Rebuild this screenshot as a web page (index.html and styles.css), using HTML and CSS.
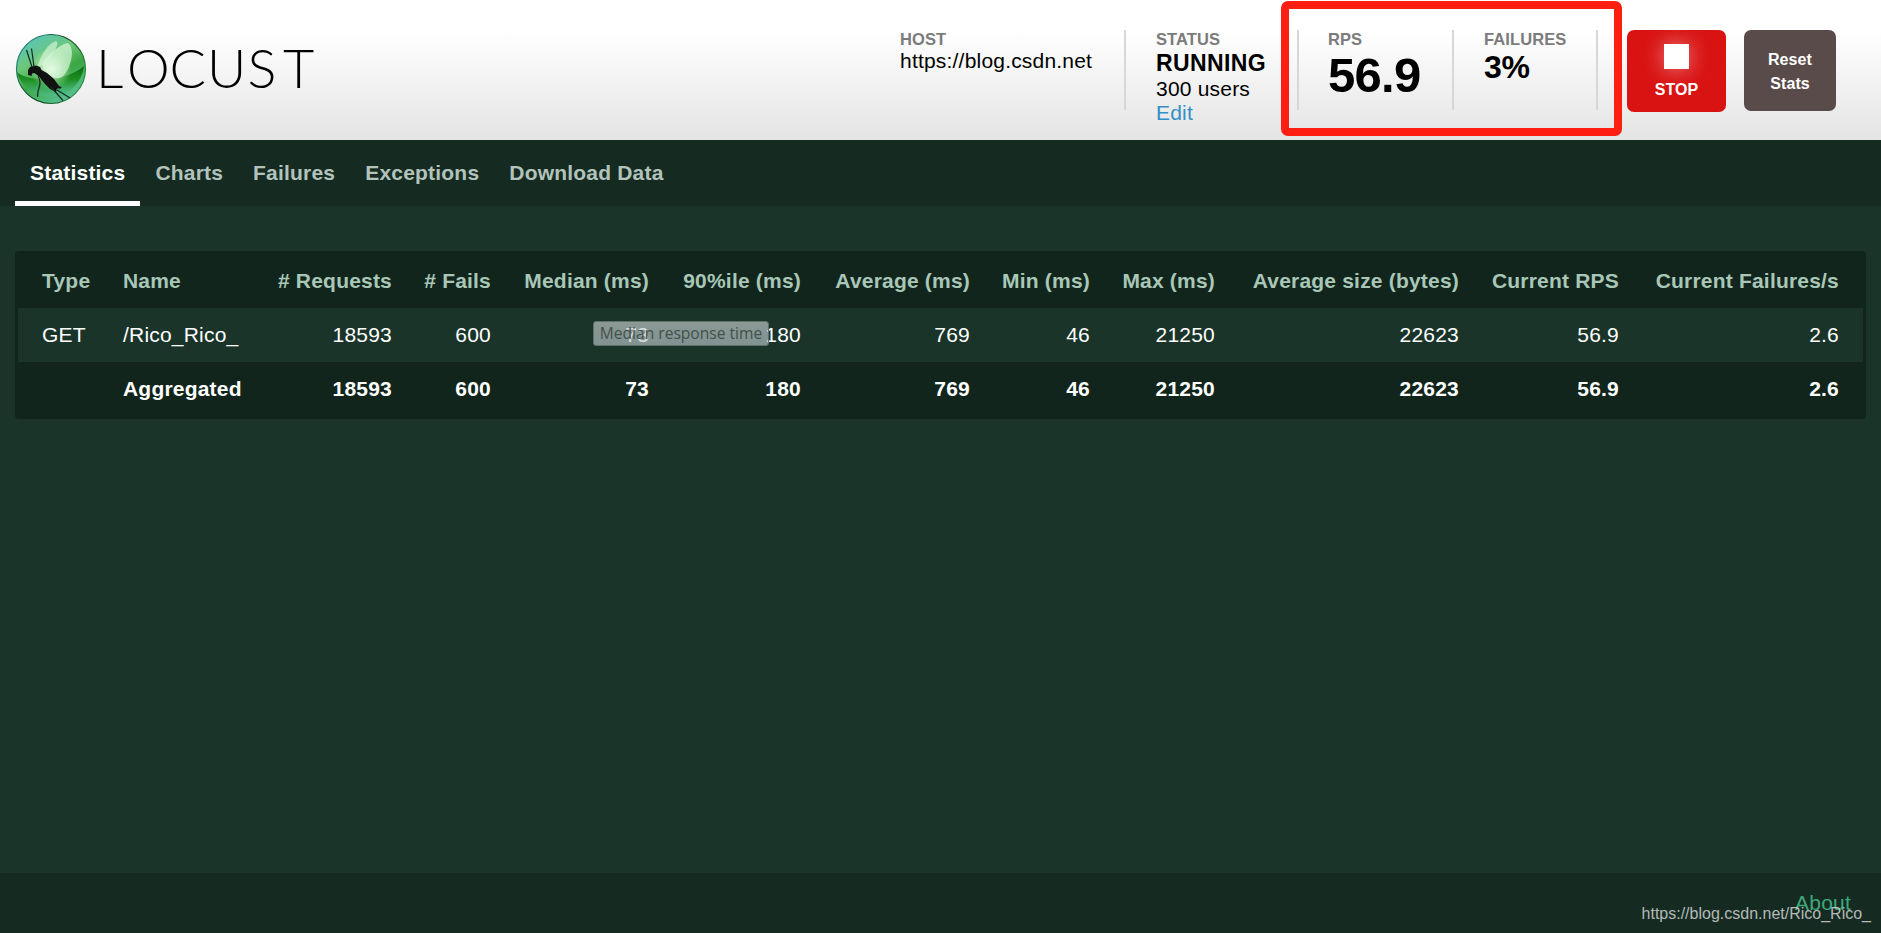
FILE: index.html
```html
<!DOCTYPE html>
<html lang="en">
<head>
    <meta charset="UTF-8">
    <title>Locust</title>
    <link rel="stylesheet" href="styles.css">
</head>
<body>
    <div class="top">
        <svg class="logo" width="306" height="80" viewBox="0 0 306 80">
            <defs>
                <linearGradient id="ball" x1="0.2" y1="0" x2="0.7" y2="1">
                    <stop offset="0" stop-color="#58c4be"/>
                    <stop offset="0.35" stop-color="#6cc878"/>
                    <stop offset="0.6" stop-color="#3da544"/>
                    <stop offset="1" stop-color="#58c49a"/>
                </linearGradient>
                <linearGradient id="shade" x1="0" y1="0" x2="0" y2="1">
                    <stop offset="0" stop-color="#0a6a0c"/>
                    <stop offset="0.45" stop-color="#178a1a" stop-opacity="0.85"/>
                    <stop offset="1" stop-color="#55c49a" stop-opacity="0.3"/>
                </linearGradient>
                <radialGradient id="glow">
                    <stop offset="0" stop-color="#fff"/>
                    <stop offset="0.4" stop-color="#e0f8dc" stop-opacity="0.7"/>
                    <stop offset="1" stop-color="#a0e0a0" stop-opacity="0"/>
                </radialGradient>
                <linearGradient id="rim" x1="0" y1="0" x2="1" y2="0.5">
                    <stop offset="0" stop-color="#2c9c9c"/>
                    <stop offset="0.6" stop-color="#0c3c18"/>
                    <stop offset="1" stop-color="#2a8a40"/>
                </linearGradient>
            </defs>
            <circle cx="36" cy="39" r="34.5" fill="url(#ball)"/>
            <path d="M1.6 42C16 53 50 52 69 36A34.5 34.5 0 0 1 1.6 42Z" fill="url(#shade)"/>
            <circle cx="36" cy="39" r="34.5" fill="none" stroke="url(#rim)" stroke-width="1.2"/>
            <circle cx="36" cy="39" r="21" fill="url(#glow)"/>
            <path d="M23 35C26 24 34 13 41 11Q45 13 38 23Q31 33 24 37Z" fill="#d8f6dc" fill-opacity="0.65"/>
            <path d="M27 34C34 25 44 14 53 13C60 18 57 36 49 45C43 52 34 46 29 40Z" fill="#d8f8da" fill-opacity="0.7"/>
            <path d="M13 40L15 37L21 35.5L25 37L26.500 40L32 43L39 49L44 56L46.500 57L46 58.500L42 58.500L41 62L35 59L29 53L24 46.500L19.500 43L17 43.500L16.500 46L13 45Z" fill="#111"/>
            <path d="M17 37L11.500 20M19 36.500L16.500 18.500M23 46Q26 51 24.500 56Q22.500 62 22.500 67M36 57L48 70.500M42 60L55 68" fill="none" stroke="#17242a" stroke-width="1.2"/>
            <text class="wordmark" y="58" x="81 112 154.5 192 232.5 268">LOCUST</text>
        </svg>
        <div class="boxes">
            <div class="box box-host">
                <div class="label">HOST</div>
                <div class="value">https://blog.csdn.net</div>
            </div>
            <div class="box box-status">
                <div class="label">STATUS</div>
                <div class="value running">RUNNING</div>
                <div class="value users">300 users</div>
                <a class="edit">Edit</a>
            </div>
            <div class="box box-rps">
                <div class="label">RPS</div>
                <div class="value rps">56.9</div>
            </div>
            <div class="box box-failures">
                <div class="label">FAILURES</div>
                <div class="value failures">3%</div>
            </div>
            <div class="button stop"><span class="stop-icon"></span>STOP</div>
            <div class="button reset">Reset<br>Stats</div>
        </div>
        <div class="highlight"></div>
    </div>

    <nav class="menu">
        <a class="tab active">Statistics</a>
        <a class="tab">Charts</a>
        <a class="tab">Failures</a>
        <a class="tab">Exceptions</a>
        <a class="tab">Download Data</a>
    </nav>

    <main class="main">
        <div class="stats-wrap">
            <table class="stats">
                <colgroup>
                    <col class="c-type"><col class="c-name"><col class="c-requests"><col class="c-fails">
                    <col class="c-median"><col class="c-ninety"><col class="c-average"><col class="c-min">
                    <col class="c-max"><col class="c-size"><col class="c-rps"><col class="c-failures">
                </colgroup>
                <thead>
                    <tr>
                        <th>Type</th>
                        <th>Name</th>
                        <th># Requests</th>
                        <th># Fails</th>
                        <th>Median (ms)</th>
                        <th>90%ile (ms)</th>
                        <th>Average (ms)</th>
                        <th>Min (ms)</th>
                        <th>Max (ms)</th>
                        <th>Average size (bytes)</th>
                        <th>Current RPS</th>
                        <th>Current Failures/s</th>
                    </tr>
                </thead>
                <tbody>
                    <tr>
                        <td>GET</td>
                        <td>/Rico_Rico_</td>
                        <td>18593</td>
                        <td>600</td>
                        <td class="median">73<span class="tooltip">Median response time</span></td>
                        <td>180</td>
                        <td>769</td>
                        <td>46</td>
                        <td>21250</td>
                        <td>22623</td>
                        <td>56.9</td>
                        <td>2.6</td>
                    </tr>
                    <tr class="total">
                        <td></td>
                        <td>Aggregated</td>
                        <td>18593</td>
                        <td>600</td>
                        <td>73</td>
                        <td>180</td>
                        <td>769</td>
                        <td>46</td>
                        <td>21250</td>
                        <td>22623</td>
                        <td>56.9</td>
                        <td>2.6</td>
                    </tr>
                </tbody>
            </table>
        </div>
    </main>

    <footer class="footer">
        <a class="about">About</a>
        <span class="watermark">https://blog.csdn.net/Rico_Rico_</span>
    </footer>
</body>
</html>
```
FILE: styles.css
```css
* {
    box-sizing: border-box;
}

body {
    margin: 0;
    height: 933px;
    display: flex;
    flex-direction: column;
    overflow: hidden;
    background: #1a342a;
    color: #fff;
    font-family: "Liberation Sans", Arial, sans-serif;
    font-size: 21px;
    letter-spacing: 0.2px;
}

.top {
    position: relative;
    height: 140px;
    flex: none;
    display: flex;
    justify-content: space-between;
    padding: 30px 45px 0 15px;
    background: linear-gradient(#fff 0, #fff 30px, #e4e4e4 140px);
    color: #000;
}

.wordmark {
    font-family: Lato, sans-serif;
    font-size: 54px;
    font-weight: 300;
    letter-spacing: 0;
}

.logo {
    overflow: visible;
}

.boxes {
    display: flex;
    align-items: flex-start;
}

.box {
    height: 80px;
    padding: 0 0 0 30px;
    border-right: 2px solid #d7d7d7;
    white-space: nowrap;
}

.label {
    height: 19px;
    padding-top: 1px;
    font-size: 16.5px;
    line-height: 17px;
    font-weight: bold;
    letter-spacing: 0.1px;
    color: #7b7b7b;
}

.value {
    line-height: 24px;
}

.box-host {
    width: 256px;
}

.box-status {
    width: 173px;
}

.box-rps {
    width: 155px;
    padding-left: 29px;
}

.box-failures {
    width: 144px;
}

.running {
    padding-top: 2px;
    font-size: 23px;
    font-weight: bold;
    letter-spacing: 0.4px;
}

.users {
    padding-top: 1px;
    line-height: 26px;
}

.edit {
    display: block;
    line-height: 22px;
    color: #338fc6;
}

.rps {
    font-size: 49px;
    line-height: 53px;
    font-weight: bold;
    letter-spacing: -0.7px;
}

.failures {
    font-size: 32px;
    line-height: 37px;
    font-weight: bold;
    letter-spacing: -0.3px;
}

.button {
    border-radius: 7px;
    color: #fff;
    font-size: 16px;
    line-height: 24px;
    font-weight: bold;
    letter-spacing: 0.1px;
    text-align: center;
}

.stop {
    width: 99px;
    height: 82px;
    margin-left: 29px;
    padding-top: 14px;
    background: #d91212;
}

.stop-icon {
    display: block;
    width: 25px;
    height: 25px;
    margin: 0 auto 9px;
    background: #fff;
    box-shadow: 0 0 22px rgba(255, 255, 255, 0.5);
}

.reset {
    width: 92px;
    height: 81px;
    margin-left: 18px;
    padding-top: 18px;
    background: #594b49;
}

.highlight {
    position: absolute;
    left: 1281px;
    top: 1px;
    width: 341px;
    height: 135px;
    border: 8px solid #ff1e12;
    border-radius: 7px;
}

.menu {
    height: 66px;
    flex: none;
    display: flex;
    padding-left: 15px;
    background: #152b22;
}

.tab {
    height: 66px;
    padding: 0 15px;
    line-height: 66px;
    font-weight: bold;
    color: #b3c3bc;
}

.tab.active {
    color: #fff;
    border-bottom: 5px solid #fff;
}

.main {
    flex: 1;
    padding: 45px 15px 0;
}

.stats-wrap {
    height: 168px;
    padding: 0 3px;
    border-radius: 4px;
    background: #12251d;
}

.stats {
    width: 1845px;
    table-layout: fixed;
    border-collapse: collapse;
}

.stats th,
.stats td {
    height: 54px;
    padding: 0 15px 0 0;
    text-align: right;
    white-space: nowrap;
}

.stats th {
    height: 57px;
    padding-top: 3px;
    color: #a8c7b7;
}

.stats th:first-child,
.stats td:first-child {
    padding-left: 24px;
    text-align: left;
}

.stats th:nth-child(2),
.stats td:nth-child(2) {
    padding-left: 16px;
    text-align: left;
}

.stats th:last-child,
.stats td:last-child {
    padding-right: 24px;
}

.stats tbody tr {
    background: #1a342a;
}

.stats tbody .total {
    background: #12251d;
    font-weight: bold;
}

.c-type { width: 89px; }
.c-name { width: 150px; }
.c-requests { width: 150px; }
.c-fails { width: 99px; }
.c-median { width: 158px; }
.c-ninety { width: 152px; }
.c-average { width: 169px; }
.c-min { width: 120px; }
.c-max { width: 125px; }
.c-size { width: 244px; }
.c-rps { width: 160px; }
.c-failures { width: 229px; }

.median {
    position: relative;
}

.tooltip {
    position: absolute;
    left: 87px;
    top: 13px;
    width: 176px;
    height: 25px;
    border: 1px solid #5f706a;
    border-radius: 3px;
    background: linear-gradient(rgba(200, 208, 206, 0.65), rgba(185, 197, 200, 0.65));
    color: #43504b;
    font-family: "Open Sans", "Noto Sans", sans-serif;
    font-size: 15.6px;
    line-height: 23px;
    letter-spacing: 0;
    text-align: center;
}

.footer {
    position: relative;
    height: 60px;
    flex: none;
    padding: 18px 30px 0 0;
    background: #152b22;
    text-align: right;
}

.about {
    color: #3fa77c;
}

.watermark {
    position: absolute;
    right: 10px;
    top: 32px;
    color: rgba(225, 225, 225, 0.78);
    font-size: 16px;
    line-height: 18px;
    letter-spacing: 0;
}
```
